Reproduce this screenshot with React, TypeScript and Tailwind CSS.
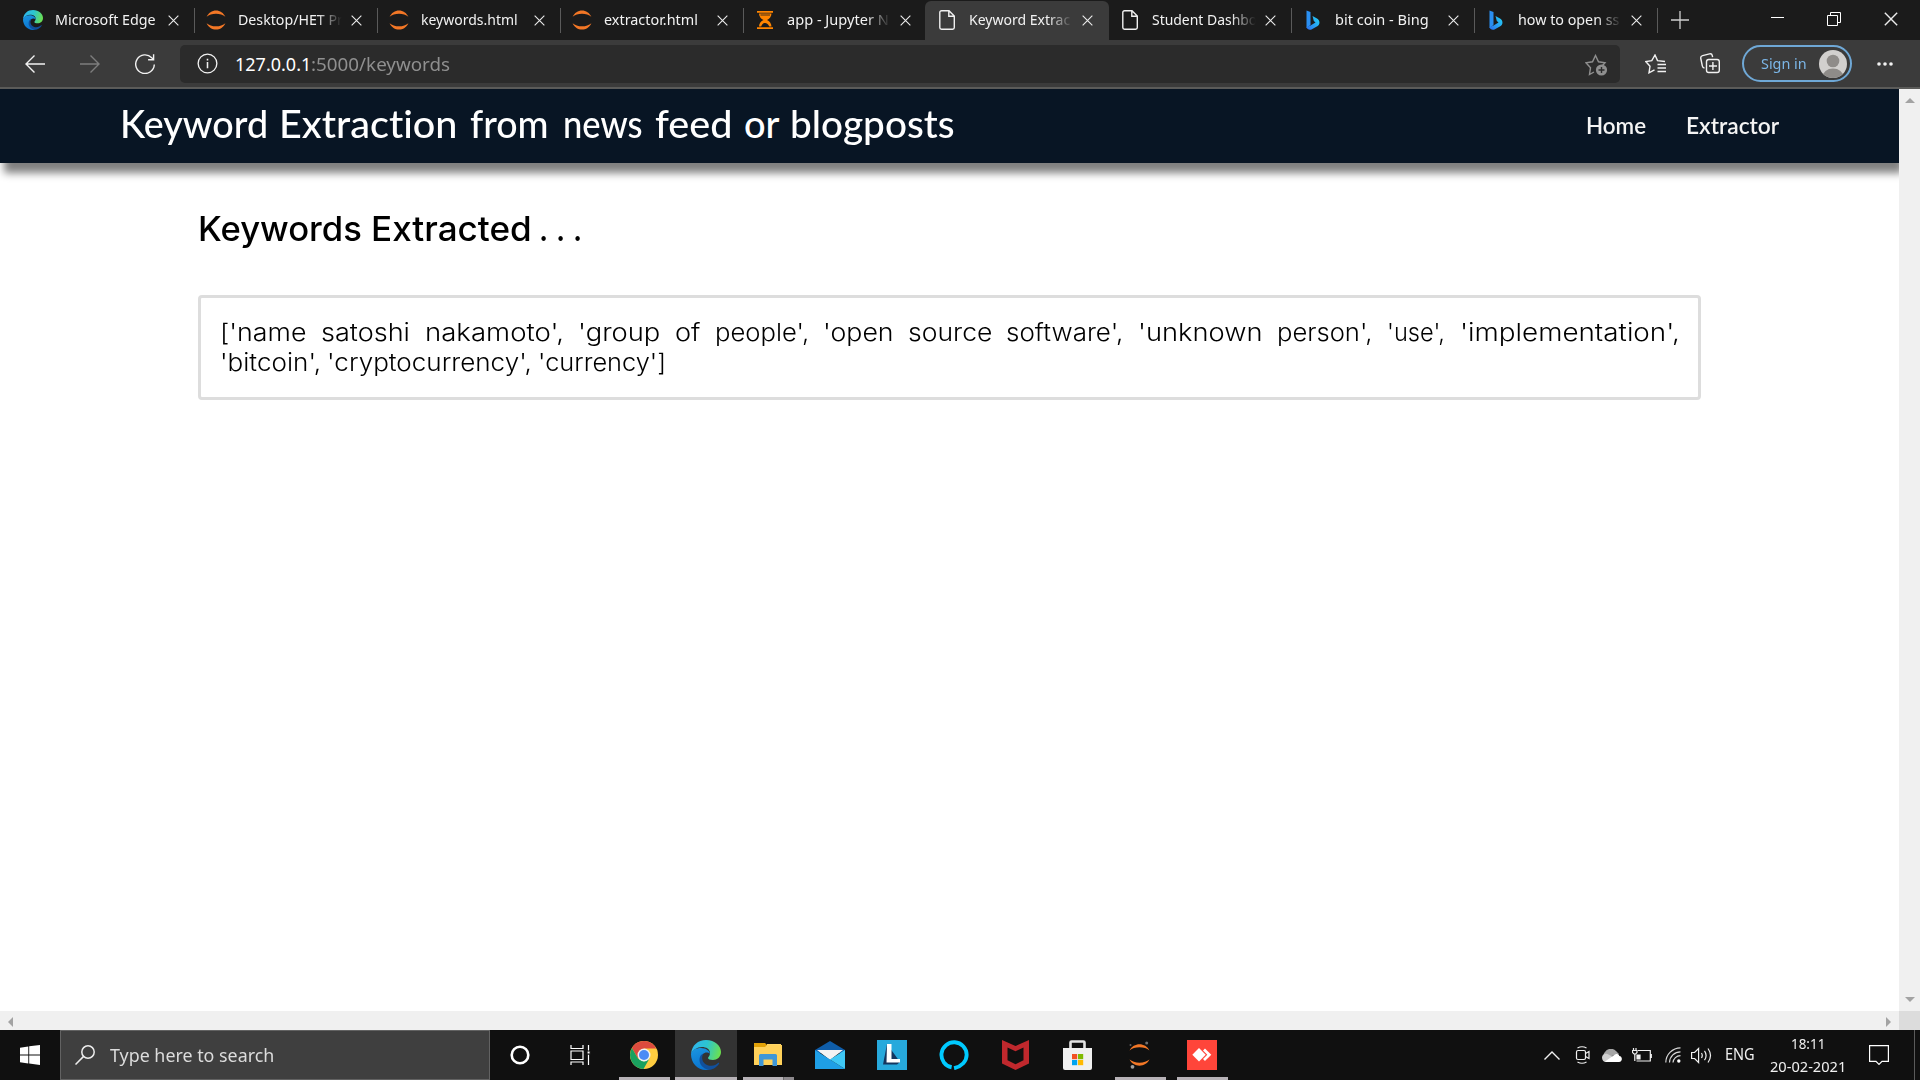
import React, { useLayoutEffect, useRef, useState } from "react";

type FitProps = { w: number; text: string; className?: string };

/** One line of text, condensed or widened so that it spans exactly `w` pixels. */
function Fit({ w, text, className = "" }: FitProps) {
  const ref = useRef<HTMLSpanElement>(null);
  const [scale, setScale] = useState(1);
  useLayoutEffect(() => {
    if (ref.current) setScale(w / ref.current.offsetWidth);
  }, [w, text]);
  return (
    <span className={`block shrink-0 whitespace-pre ${className}`} style={{ width: w }}>
      <span ref={ref} className="inline-block origin-left" style={{ transform: `scaleX(${scale})` }}>
        {text}
      </span>
    </span>
  );
}

const EdgeLogo = ({ className, id }: { className: string; id: string }) => (
  <svg viewBox="0 0 30 30" className={className}>
    <defs>
      <linearGradient id={`${id}a`} x1="0" y1="0.3" x2="1" y2="0.5">
        <stop offset="0" stopColor="#2fb4ee" />
        <stop offset="0.5" stopColor="#2cc5d0" />
        <stop offset="1" stopColor="#6be04f" />
      </linearGradient>
      <linearGradient id={`${id}b`} x1="0.2" y1="0" x2="0.5" y2="1">
        <stop offset="0" stopColor="#1a95e0" />
        <stop offset="1" stopColor="#0a72cf" />
      </linearGradient>
    </defs>
    <path d="M0 14C1 5 7 0 15 0c9 0 15 6 15 12 0 5-4 8-8 8-3 0-5-1-5-2s2-2 2-5c0-4-4-6-8-6-5 0-9 3-11 7z" fill={`url(#${id}a)`} />
    <path d="M0 14c1-4 5-6 10-6 5 0 9 3 9 6-3-3-9-1-9 5 0 5 4 10 9 10.500C8 32 0 24 0 14z" fill={`url(#${id}b)`} />
    <path d="M12.500 13.500C10 17 11 23 16 25c5 2 9 0 11-2 1-.6 1.500 0 1 .7C26 27 22 29.500 18 29.800 12 29 8 24 8.500 19c.3-3 2-5 4-5.500z" fill="#11509c" />
  </svg>
);

const JupyterArcs = ({ className }: { className: string }) => (
  <svg viewBox="0 0 20 20" className={className}>
    <path d="M.6 6.800C2.500 2.800 6 .4 10 .4s7.500 2.400 9.400 6.400C17 4.900 13.800 3.700 10 3.700S3 4.900.6 6.800z" fill="#f37726" />
    <path d="M.6 13.200C2.500 17.200 6 19.600 10 19.600s7.500-2.400 9.400-6.400c-2.400 1.900-5.600 3.100-9.400 3.100s-7-1.200-9.400-3.100z" fill="#f37726" />
  </svg>
);

const Hourglass = () => (
  <svg viewBox="0 0 16 18" className="h-[18px] w-[16px]" fill="#ff8500">
    <path d="M0 0h16v1.800H0zM0 16.200h16V18H0zM2 2.500h12.500C14.500 5.500 12.500 7.800 10 9c2.500 1.200 4.500 3.500 4.500 6.500h-2.200C11 12.500 9.500 12 8.200 12S5 12.500 4.200 15.500H2C2 12.500 4 10.200 6.500 9 4 7.800 2 5.500 2 2.500z" />
    <path d="M3.500 4h9.500" stroke="#1b1b1b" strokeWidth="0.8" />
  </svg>
);

const PageIcon = () => (
  <svg viewBox="0 0 16 20" className="h-5 w-4" fill="none" stroke="#f0f0f0" strokeWidth="1.400">
    <path d="M2.500.8H10L15.300 6v11.500a1.700 1.700 0 0 1-1.700 1.700H2.500A1.700 1.700 0 0 1 .8 17.500v-15A1.700 1.700 0 0 1 2.500.8zM9.800.8v5.400h5.400" />
  </svg>
);

const BingLogo = ({ id }: { id: string }) => (
  <svg viewBox="0 0 14 20" className="h-5 w-3.5 shrink-0">
    <defs>
      <linearGradient id={id} x1="0" y1="1" x2="1" y2="0.3">
        <stop offset="0" stopColor="#2b6df0" />
        <stop offset="1" stopColor="#25c9f5" />
      </linearGradient>
    </defs>
    <path d="M.5.500l4 1.500v13L.5 18z" fill="#2a8ff2" />
    <path d="M6.500 6l4.500 2.500c2 1.200 2.800 3 2.300 5.300-.2.900-.8 1.600-1.600 2.100L5.500 19.400c-2.200.9-4.500-.2-5-2.400l4-1.500 5-3-1.700-1.500z" fill={`url(#${id})`} />
  </svg>
);

type Tab = { title: string; w: number; icon: React.ReactNode; active?: boolean; fade?: boolean };

const jup = <JupyterArcs className="h-5 w-5" />;

const tabs: Tab[] = [
  { title: "Microsoft Edge", w: 101, icon: <EdgeLogo id="t" className="h-5 w-5" /> },
  { title: "Desktop/HET Pr", w: 105, icon: jup, fade: true },
  { title: "keywords.html", w: 97, icon: jup },
  { title: "extractor.html", w: 94, icon: jup },
  { title: "app - Jupyter N", w: 102, icon: <Hourglass />, fade: true },
  { title: "Keyword Extrac", w: 101, icon: <PageIcon />, active: true, fade: true },
  { title: "Student Dashbo", w: 105, icon: <PageIcon />, fade: true },
  { title: "bit coin - Bing", w: 94, icon: <BingLogo id="b1" /> },
  { title: "how to open ss", w: 101, icon: <BingLogo id="b2" />, fade: true },
];

const Cross = ({ className }: { className: string }) => (
  <svg viewBox="0 0 12 12" className={className} fill="none" stroke="#ececec" strokeWidth="1.200">
    <path d="M.7.700l10.600 10.600M11.300.700L.7 11.300" />
  </svg>
);

function TabStrip() {
  return (
    <div className="flex h-10 bg-[#1b1b1b] pl-[12px]">
      {tabs.map((t, i) => (
        <div
          key={t.title}
          className={
            t.active
              ? "mt-px -ml-px flex h-[39px] w-[184px] shrink-0 items-center rounded-t-md bg-[#3b3b3b] pb-px pl-px"
              : "flex h-10 w-[182.9px] shrink-0 items-center"
          }
        >
          <div className="ml-[9px] flex w-6 shrink-0 justify-center">{t.icon}</div>
          <div
            className={
              t.fade
                ? "ml-[10px] w-[107px] shrink-0 [mask-image:linear-gradient(to_right,black_74%,transparent_97%)]"
                : "ml-[10px] w-[107px] shrink-0"
            }
          >
            <Fit w={t.w} text={t.title} className="pb-[2px] text-[15px] leading-6 text-[#f2f2f2]" />
          </div>
          <Cross className="ml-[6px] h-[11px] w-[11px] shrink-0" />
          {i !== 4 && i !== 5 && <div className="ml-auto h-[25px] w-px bg-[#5a5a5a]" />}
        </div>
      ))}
      <svg viewBox="0 0 18 18" className="mt-[11px] ml-[13px] h-[18px] w-[18px]" stroke="#d0d0d0" strokeWidth="1.300">
        <path d="M9 0v18M0 9h18" />
      </svg>
      <div className="ml-auto flex h-[37px] items-center pr-[22px]">
        <svg viewBox="0 0 13 13" className="h-[13px] w-[13px]" stroke="white" strokeWidth="1">
          <path d="M0 5.500h13" />
        </svg>
        <svg viewBox="0 0 14 14" className="ml-[43px] h-[14px] w-[14px]" fill="none" stroke="white" strokeWidth="1">
          <path d="M.5 3.500h10v10H.5zM3.500 3.500v-3h10v10h-3" />
        </svg>
        <Cross className="ml-[43px] h-[14px] w-[14px]" />
      </div>
    </div>
  );
}

function Toolbar() {
  return (
    <div className="flex h-[49px] items-center border-b-2 border-[#5b5b59] bg-[#3b3b3b] pr-[27px] pl-[25px]">
      <svg viewBox="0 0 20 18" className="h-[18px] w-5" fill="none" stroke="#f2f2f2" strokeWidth="1.400">
        <path d="M20 9H1M9.500.500L1 9l8.500 8.500" />
      </svg>
      <svg viewBox="0 0 20 18" className="ml-[35px] h-[18px] w-5" fill="none" stroke="#7d7d7d" strokeWidth="1.400">
        <path d="M0 9h19M10.500.500L19 9l-8.500 8.500" />
      </svg>
      <svg viewBox="0 0 20 20" className="ml-[35px] h-5 w-5" fill="none" stroke="#f2f2f2" strokeWidth="1.400">
        <path d="M19.300 10.500a9.300 9.300 0 1 1-2.600-6.800L18.700 5.600M18.600.200v5.500h-5.500" />
      </svg>
      <div className="ml-[25px] flex h-[38px] w-[1440px] items-center rounded-[5px] bg-[#2b2b2b] pr-[11px] pl-[17px]">
        <svg viewBox="0 0 22 22" className="h-[21px] w-[21px]" fill="none" stroke="#f2f2f2" strokeWidth="1.400">
          <circle cx="11" cy="11" r="9.800" />
          <path d="M11 9.500v6.500M11 6v1.800" strokeWidth="1.600" />
        </svg>
        <Fit w={76} text="127.0.0.1" className="ml-[17px] pt-px text-[18px] text-white" />
        <Fit w={139} text=":5000/keywords" className="pt-px text-[18px] text-[#8f8f8f]" />
        <svg viewBox="0 0 24 22" className="mt-[2px] ml-auto h-[22px] w-6" fill="none" stroke="#8f8f8f" strokeWidth="1.400">
          <path d="M9 18l-4.500 2.500 1-6.800L1 8.800l6.500-1L10.500 1.500l3 6.300 6.500 1-2.500 2.700" />
          <circle cx="16.500" cy="16" r="5.600" fill="#8f8f8f" stroke="none" />
          <path d="M16.500 13v6M13.500 16h6" stroke="#2b2b2b" />
        </svg>
      </div>
      <svg viewBox="0 0 21 20" className="ml-[25px] h-5 w-[21px]" fill="none" stroke="#f2f2f2" strokeWidth="1.400">
        <path d="M9.500 15.800l-5.500 3 1-6.500L.8 7.500l6-.9L10 1l2.500 5.600 7.500.9M12.500 10.500H21M12.500 14H21M12.500 17.500H21" />
      </svg>
      <svg viewBox="0 0 20 21" className="ml-[34px] h-[21px] w-5" fill="none" stroke="#f2f2f2" strokeWidth="1.400">
        <rect x="6.500" y="6.500" width="12.800" height="13" rx="2.200" />
        <path d="M12.900 9v8M9 13h8M4.500 15C3 14.800 2.600 14 2.300 12.800L.8 5.500C.5 4 1 3 2.600 2.600L9.500.900c1.500-.3 2.500.2 2.800 1.700l.3 1.500" />
      </svg>
      <div className="ml-[22px] flex h-[37px] w-[110px] items-center rounded-full border-2 border-[#6fa8d6] pl-[17px]">
        <Fit w={46} text="Sign in" className="text-[15px] text-[#7cb7e8]" />
        <svg viewBox="0 0 28 28" className="ml-[12px] h-7 w-7">
          <clipPath id="av"><circle cx="14" cy="14" r="14" /></clipPath>
          <g clipPath="url(#av)">
            <path d="M0 0h28v28H0z" fill="#d2d0ce" />
            <circle cx="14" cy="11" r="6.300" fill="#8f8c89" />
            <ellipse cx="14" cy="27" rx="10.500" ry="8.500" fill="#8f8c89" />
          </g>
        </svg>
      </div>
      <svg viewBox="0 0 16 4" className="ml-auto h-1 w-4" fill="#f2f2f2">
        <circle cx="2" cy="2" r="1.800" /><circle cx="8" cy="2" r="1.800" /><circle cx="14" cy="2" r="1.800" />
      </svg>
    </div>
  );
}

/** Words of the site title: text, width, gap before the word. */
const titleWords: [string, number, number][] = [
  ["Keyword", 148, 0],
  ["Extraction", 179, 11],
  ["from", 79, 12],
  ["news", 80, 14],
  ["feed", 77, 12],
  ["or", 36, 12],
  ["blogposts", 165, 10],
];

const firstLine: [string, number][] = [
  ["['name", 87],
  ["satoshi", 89],
  ["nakamoto',", 139],
  ["'group", 82],
  ["of", 26],
  ["people',", 94],
  ["'open", 70],
  ["source", 84],
  ["software',", 117],
  ["'unknown", 125],
  ["person',", 96],
  ["'use',", 58],
  ["'implementation',", 220],
];

const secondLine: [string, number][] = [
  ["'bitcoin',", 101],
  ["'cryptocurrency',", 205],
  ["'currency']", 128],
];

function Page() {
  return (
    <div className="flex h-[941px] flex-col bg-white">
      <div className="flex min-h-0 flex-1">
        <div className="min-w-0 flex-1 overflow-hidden">
          <header className="flex h-[74px] items-center bg-[#081524] pr-[120px] pl-[120px] font-['Lato'] shadow-[4px_10px_8px_#808080] [font-variant-ligatures:none]">
            <h1 className="flex pb-[6px] text-[38px] leading-[50px] font-medium text-white">
              {titleWords.map(([t, w, gap]) => (
                <span key={t} className="flex" style={{ marginLeft: gap }}>
                  <Fit w={w} text={t} />
                </span>
              ))}
            </h1>
            <nav className="ml-auto flex gap-[40px] text-[22px] leading-8 font-semibold text-[#f4f4f4]">
              <Fit w={60} text="Home" />
              <Fit w={93} text="Extractor" />
            </nav>
          </header>
          <main className="pt-[41px] pl-[198px] font-['Inter'] text-black">
            <h2 className="flex text-[34px] leading-[50px] font-medium">
              <Fit w={164} text="Keywords" />
              <Fit w={161} text="Extracted" className="ml-[9px]" />
              <Fit w={43} text=". . ." className="ml-[7px]" />
            </h2>
            <div className="mt-[41px] h-[105px] w-[1503px] rounded-[4px] border-3 border-[#dddddd] pt-[20px] pr-[18px] pl-[19px] text-[24px] leading-[30px] font-light">
              <div className="flex justify-between">
                {firstLine.map(([t, w]) => <Fit key={t} w={w} text={t} />)}
              </div>
              <div className="flex gap-[6px]">
                {secondLine.map(([t, w]) => <Fit key={t} w={w} text={t} />)}
              </div>
            </div>
          </main>
        </div>
        <div className="flex w-[21px] flex-col items-center justify-between bg-[#f0f0f0] pt-[9px] pb-[9px]">
          <svg viewBox="0 0 10 5" className="h-[5px] w-[10px]" fill="#a3a3a3"><path d="M0 5l5-5 5 5z" /></svg>
          <svg viewBox="0 0 10 5" className="h-[5px] w-[10px]" fill="#a3a3a3"><path d="M0 0l5 5 5-5z" /></svg>
        </div>
      </div>
      <div className="flex h-[19px]">
        <div className="flex flex-1 items-center justify-between bg-[#f0f0f0] px-[8px] pt-[2px]">
          <svg viewBox="0 0 5 10" className="h-[10px] w-[5px]" fill="#a3a3a3"><path d="M5 0L0 5l5 5z" /></svg>
          <svg viewBox="0 0 5 10" className="h-[10px] w-[5px]" fill="#a3a3a3"><path d="M0 0l5 5-5 5z" /></svg>
        </div>
        <div className="w-[21px] bg-[#dcdcdc]" />
      </div>
    </div>
  );
}

const apps: { key: string; icon: React.ReactNode; open?: boolean; current?: boolean; stacked?: boolean }[] = [
  {
    key: "chrome",
    open: true,
    icon: (
      <svg viewBox="0 0 28 28" className="h-7 w-7">
        <circle cx="14" cy="14" r="14" fill="#ffcd40" />
        <path d="M1.900 7A14 14 0 0 1 26.300 7.500H14L8 17.500z" fill="#dd4b3e" />
        <path d="M1.900 7A14 14 0 0 0 13.500 28l6-10.500-5.500 3-6-3z" fill="#1aa15f" />
        <circle cx="14" cy="14" r="6.500" fill="#f1f1f1" />
        <circle cx="14" cy="14" r="5" fill="#4c8bf5" />
      </svg>
    ),
  },
  { key: "edge", open: true, current: true, icon: <EdgeLogo id="k" className="h-[30px] w-[30px]" /> },
  {
    key: "explorer",
    open: true,
    stacked: true,
    icon: (
      <svg viewBox="0 0 28 24" className="mb-[2px] h-6 w-7">
        <path d="M0 1h11l2 2v4H0z" fill="#e2a107" />
        <path d="M13 2h14v5H13z" fill="#ffd768" />
        <path d="M0 5h11l2-2h15v20H0z" fill="#ffd15a" />
        <path d="M5 13.500q0-1.500 1.500-1.500h15q1.500 0 1.500 1.500V24h-4.500v-6.500H9.500V24H5z" fill="#3f97d8" />
      </svg>
    ),
  },
  {
    key: "mail",
    icon: (
      <svg viewBox="0 0 30 28" className="h-7 w-[30px]">
        <path d="M0 9L15 0l15 9v3H0z" fill="#0f5da9" />
        <path d="M2 9h26L15 19z" fill="#f3f3f3" />
        <path d="M0 9l30 19H0z" fill="#1f9fe6" />
        <path d="M30 9v19L15 18.500z" fill="#3fc8f5" />
      </svg>
    ),
  },
  {
    key: "lenovo",
    icon: (
      <svg viewBox="0 0 30 30" className="h-[30px] w-[30px]">
        <path d="M0 0h30v30H0z" fill="#27a9dc" />
        <path d="M10 4L6 24.500h14l3-2.500z" fill="#14365f" />
        <path d="M10 4h4.500v15H23v3.500H9.500z" fill="white" />
      </svg>
    ),
  },
  {
    key: "alexa",
    icon: (
      <svg viewBox="0 0 30 30" className="h-[30px] w-[30px]">
        <path d="M12.500 27.800A13 13 0 1 1 28 15c0 6.500-5 12-13 13.800" fill="none" stroke="#00caff" strokeWidth="4" transform="translate(.5 .3) scale(.97)" />
      </svg>
    ),
  },
  {
    key: "mcafee",
    icon: (
      <svg viewBox="0 0 27 30" className="mr-px h-[30px] w-[27px]">
        <path d="M0 0l13.500 6L27 0v23.500L13.500 30 0 23.500zM5.500 7.500v12.700l8 4 8-4V7.500l-8 3.700z" fill="#c0282d" fillRule="evenodd" />
      </svg>
    ),
  },
  {
    key: "store",
    icon: (
      <svg viewBox="0 0 29 30" className="mr-[2px] h-[30px] w-[29px]">
        <path d="M7.500 10V2.500q0-1 1-1h12q1 0 1 1V10" fill="none" stroke="#e4e4e4" strokeWidth="2.600" />
        <path d="M0 8h29v20q0 2-2 2H2q-2 0-2-2z" fill="#f0f0f0" />
        <path d="M9 14h5.200v5.200H9z" fill="#f25022" />
        <path d="M15 14h5.200v5.200H15z" fill="#7fba00" />
        <path d="M9 20h5.200v5.200H9z" fill="#00a4ef" />
        <path d="M15 20h5.200v5.200H15z" fill="#ffb900" />
      </svg>
    ),
  },
  {
    key: "jupyter",
    open: true,
    icon: (
      <svg viewBox="0 0 22 28" className="h-7 w-[22px]">
        <path d="M.6 9.500C2.500 5.500 6.500 3.300 10.500 3.300S18.500 5.500 20.400 9.500C18 7.500 14.500 6.300 10.500 6.300S3 7.500.6 9.500zM.6 18.500c1.900 4 5.900 6.200 9.900 6.200s8-2.200 9.900-6.200c-2.400 2-5.900 3.200-9.900 3.200s-7.500-1.200-9.900-3.200z" fill="#f37726" />
        <circle cx="17.700" cy="2" r="1.500" fill="#6f7070" />
        <circle cx="1.500" cy="4" r="1" fill="#616262" />
        <circle cx="3.500" cy="25.800" r="1.900" fill="#9e9e9e" />
      </svg>
    ),
  },
  {
    key: "anydesk",
    open: true,
    icon: (
      <svg viewBox="0 0 30 30" className="h-[30px] w-[30px]">
        <path d="M0 0h30v30H0z" fill="#ff453a" />
        <path d="M12 8l6.700 6.700L12 21.500l-6.700-6.800z" fill="white" />
        <path d="M17 9.500l5.300 5.200-5.300 5.300" fill="none" stroke="white" strokeWidth="2.800" />
      </svg>
    ),
  },
];

function Taskbar() {
  return (
    <div className="flex h-[50px] bg-[#101010] font-['Noto_Sans']">
      <div className="flex w-[60px] items-center justify-center">
        <svg viewBox="0 0 20 20" className="h-5 w-5" fill="white">
          <path d="M0 2.700l8.300-1.200v8H0zM9.200 1.300L20 0v9.500H9.200zM0 10.400h8.300v8L0 17.200zM9.200 10.400H20V20L9.200 18.600z" />
        </svg>
      </div>
      <div className="flex w-[430px] items-center border border-[#626262] bg-[#3f3f3f] pl-[14px]">
        <svg viewBox="0 0 20 20" className="h-5 w-5" fill="none" stroke="#ededed" strokeWidth="1.500">
          <circle cx="13" cy="7" r="6.200" />
          <path d="M8.600 11.400L.5 19.500" />
        </svg>
        <Fit w={164} text="Type here to search" className="ml-[15px] text-[18.5px] leading-7 text-[#dcdcdc]" />
      </div>
      <div className="flex w-[60px] items-center justify-center">
        <svg viewBox="0 0 20 20" className="h-5 w-5" fill="none" stroke="white" strokeWidth="2.600">
          <circle cx="10" cy="10" r="8.300" />
        </svg>
      </div>
      <div className="flex w-[61px] items-center justify-center">
        <svg viewBox="0 0 21 20" className="h-5 w-[21px]" fill="none" stroke="white" strokeWidth="1.200">
          <path d="M1 0v3.500h12V0M1 6h12v8.500H1zM1 20v-3h12v3M18.500 0v20" />
          <path d="M17 6h3.200v3.200H17z" fill="white" stroke="#101010" />
        </svg>
      </div>
      <div className="ml-[2px] flex">
        {apps.map((a) => (
          <div
            key={a.key}
            className={
              a.current
                ? "flex w-[62px] flex-col items-center bg-[#333333]"
                : "flex w-[62px] flex-col items-center"
            }
          >
            <div className="flex h-[47px] items-center justify-center pt-[3px]">{a.icon}</div>
            {a.open && (
              <div className={a.current ? "flex h-[3px] w-[62px]" : "flex h-[3px] w-[51px]"}>
                <div className="flex-1 bg-[#b7b2b7]" />
                {a.stacked && <div className="w-[11px] border-l border-[#6a6a6a] bg-[#8d898d]" />}
              </div>
            )}
          </div>
        ))}
      </div>
      <div className="ml-auto flex items-center text-[#f0f0f0]">
        <svg viewBox="0 0 16 9" className="h-[9px] w-4" fill="none" stroke="#f0f0f0" strokeWidth="1.400">
          <path d="M.5 8.500L8 1l7.500 7.500" />
        </svg>
        <svg viewBox="0 0 16 18" className="ml-[15px] h-[18px] w-4" fill="none" stroke="#f0f0f0" strokeWidth="1.200">
          <rect x="1.500" y="4.500" width="9" height="9" rx="1.500" />
          <path d="M10.500 7.500l3.500-2v7l-3.500-2M2.500 2Q7-.5 11.500 2M2.500 16q4.500 2.500 9 0" />
        </svg>
        <svg viewBox="0 0 20 13" className="ml-[11px] h-[13px] w-5">
          <path d="M3 9a4 4 0 0 1 0-6A7 7 0 0 1 14 2l3 3z" fill="#a5a5a5" />
          <path d="M0 8.500C0 5.500 3 4 5.500 5L13 9 9 13H4C1.500 13 0 11 0 8.500z" fill="#cfcfcf" />
          <path d="M3 12.500L13 5.500c3-1 4 0 4.300 1.500C21 7.500 20.500 13 17 13H4z" fill="white" />
        </svg>
        <svg viewBox="0 0 20 15" className="ml-[10px] h-[15px] w-5" fill="none" stroke="#f0f0f0" strokeWidth="1.200">
          <path d="M6 2.500H18.300v10.500H4.500M19.300 6v4" />
          <path d="M5 7h3v4H5z" fill="#f0f0f0" />
          <path d="M1.500 0v2M4 0v2M.5 2.500h4.500v2L3.700 6H2L.5 4.500zM2.800 6v7" />
        </svg>
        <svg viewBox="0 0 16 16" className="ml-[13px] h-4 w-4" fill="none" stroke="#d8d8d8" strokeWidth="1.200">
          <path d="M.8 15.500A15 15 0 0 1 15.500.800M4.500 15.500A11 11 0 0 1 15.500 4.800M8 15.500A7.500 7.500 0 0 1 15.500 8.600" />
          <circle cx="13.800" cy="14" r="1.700" fill="white" stroke="none" />
        </svg>
        <svg viewBox="0 0 21 17" className="ml-[10px] h-[17px] w-[21px]" fill="none" stroke="#f0f0f0" strokeWidth="1.200">
          <path d="M.6 5.500h3l4-4v14l-4-4h-3zM10.500 6q1.500 2.500 0 5M13.500 3.800q3.200 4.700 0 9.400M17 1.500q5 7 0 14" />
        </svg>
        <Fit w={30} text="ENG" className="ml-[13px] text-[15.5px]" />
        <div className="ml-[15px] flex h-[50px] flex-col items-center pt-[2px] text-[15px] leading-[23px]">
          <Fit w={34} text="18:11" />
          <Fit w={76} text="20-02-2021" />
        </div>
        <svg viewBox="0 0 20 20" className="ml-[23px] h-5 w-5" fill="none" stroke="white" strokeWidth="1.200">
          <path d="M.6.600h18.800v15.800H13l-3 3-3-3H.6z" />
        </svg>
        <div className="ml-[25px] h-[50px] w-px bg-[#5a5a5a]" />
        <div className="w-[5px]" />
      </div>
    </div>
  );
}

export default function App() {
  return (
    <div className="h-[1080px] w-[1920px] overflow-hidden font-['Noto_Sans',sans-serif]">
      <TabStrip />
      <Toolbar />
      <Page />
      <Taskbar />
    </div>
  );
}
